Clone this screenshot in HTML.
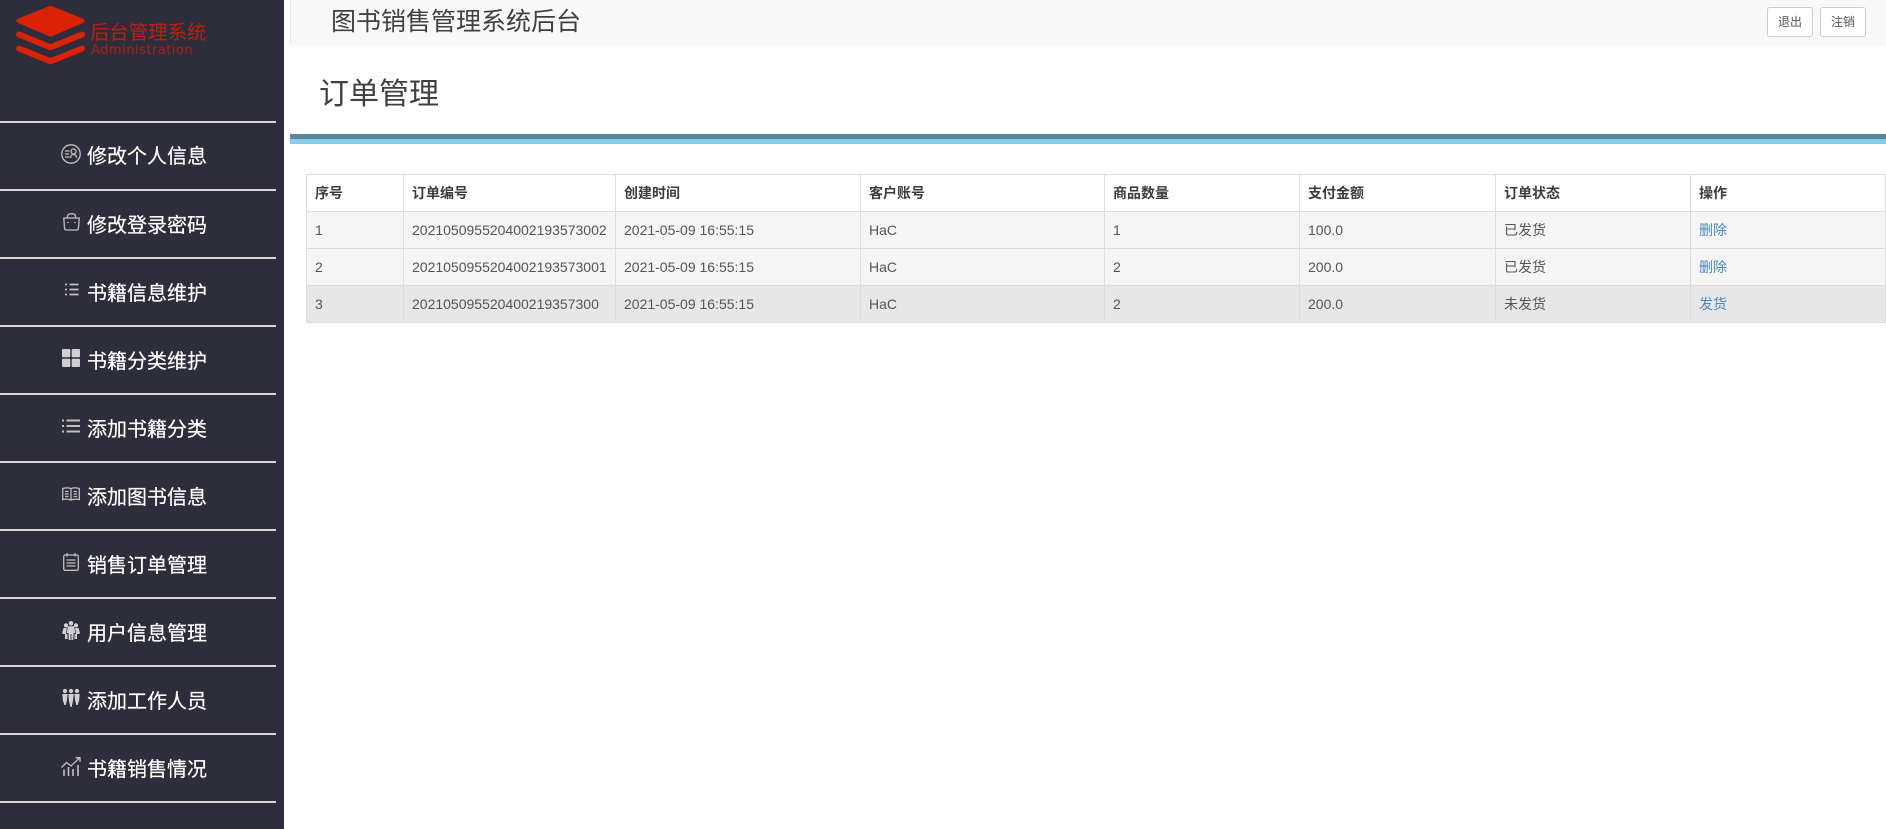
<!DOCTYPE html>
<html lang="zh"><head><meta charset="utf-8"><title>图书销售管理系统后台</title>
<style>
html,body{margin:0;padding:0;width:1886px;height:829px;overflow:hidden;background:#fff}
body{font-family:"Liberation Sans","Noto Sans CJK SC",sans-serif;color:#333;position:relative}
.a{position:absolute;white-space:nowrap}
#side{left:0;top:0;width:284px;height:829px;background:#2d2d3c}
.ln{left:0;width:276px;height:2px;background:#d8d8d8}
.m{left:87px;font-size:20px;line-height:28px;color:#fff;-webkit-text-stroke:.2px #fff}
svg{position:absolute;overflow:visible}
.ic{fill:none;stroke:#c0c0c4;stroke-width:1.3}
.f{fill:#d0d0d2;stroke:none}
#top{left:290px;top:0;width:1596px;height:46px;background:#f8f8f8;border-left:1px solid #e7e7e7;box-sizing:border-box}
.btn{top:7px;width:46px;height:30px;box-sizing:border-box;background:#fff;border:1px solid #ccc;border-radius:3px;font-size:12px;line-height:28px;text-align:center;color:#555}
table{position:absolute;left:306px;top:174px;width:1579px;border-collapse:collapse;table-layout:fixed;font-size:14px;line-height:20px}
td,th{border:1px solid #ddd;padding:8px;text-align:left;height:20px;box-sizing:content-box;white-space:nowrap}
th{font-weight:bold;background:#fff;color:#3c3c3c}
tr.s td{background:#f5f5f5}
tr.h td{background:#e7e7e7}
td{color:#555}
td a{color:#4a88bd;text-decoration:none}
</style></head><body>
<div id="side" class="a"></div>
<svg style="left:0;top:0" width="284" height="70" viewBox="0 0 284 70">
<path d="M50.5 6.5 L83 19.5 Q85 20.7 83 22 L50.5 36 L18 22 Q16 20.7 18 19.5 Z" fill="#db2106" stroke="#db2106" stroke-width="1.5" stroke-linejoin="round"/>
<path d="M19 34.5 L50.5 47.3 L82 34.5" fill="none" stroke="#db2106" stroke-width="6" stroke-linecap="round" stroke-linejoin="round"/>
<path d="M19 48.5 L50.5 61.3 L82 48.5" fill="none" stroke="#db2106" stroke-width="6" stroke-linecap="round" stroke-linejoin="round"/>
</svg>
<div class="a" style="left:90px;top:21px;font-size:19.4px;line-height:24px;color:#bd200d">后台管理系统</div>
<div class="a" style="left:91px;top:43px;font-size:13px;line-height:15px;color:#b01e0c;letter-spacing:.5px;font-family:'DejaVu Sans',sans-serif">Administration</div>

<div class="a ln" style="top:121px"></div>
<div class="a ln" style="top:189px"></div>
<div class="a ln" style="top:257px"></div>
<div class="a ln" style="top:325px"></div>
<div class="a ln" style="top:393px"></div>
<div class="a ln" style="top:461px"></div>
<div class="a ln" style="top:529px"></div>
<div class="a ln" style="top:597px"></div>
<div class="a ln" style="top:665px"></div>
<div class="a ln" style="top:733px"></div>
<div class="a ln" style="top:801px"></div>

<div class="a m" style="top:143px">修改个人信息</div>
<div class="a m" style="top:212px">修改登录密码</div>
<div class="a m" style="top:280px">书籍信息维护</div>
<div class="a m" style="top:348px">书籍分类维护</div>
<div class="a m" style="top:416px">添加书籍分类</div>
<div class="a m" style="top:484px">添加图书信息</div>
<div class="a m" style="top:552px">销售订单管理</div>
<div class="a m" style="top:620px">用户信息管理</div>
<div class="a m" style="top:688px">添加工作人员</div>
<div class="a m" style="top:756px">书籍销售情况</div>

<svg class="ic" style="left:61px;top:144px" width="20" height="20" viewBox="0 0 20 20"><circle cx="10" cy="10" r="9.2"/><path d="M4 7H8.5M4 10H8M4 13H8.5"/><circle cx="12.5" cy="7.5" r="2.5"/><path d="M9.5 14Q10 10.5 12.5 10.5T15.8 14"/></svg>
<svg class="ic" style="left:63px;top:213px" width="17" height="18" viewBox="0 0 17 18"><path d="M.8 5H16.2L15.5 15Q15.3 17 13.5 17H3.5Q1.7 17 1.5 15Z"/><path d="M4.5 5V3.5Q4.5 .7 8.5 .7T12.5 3.5V5"/><path d="M5 9V10M12 9V10" stroke-width="1.6"/></svg>
<svg class="ic" style="left:65px;top:283px;stroke-width:1.7" width="14" height="13" viewBox="0 0 14 13"><path d="M0 1.5H2M4.5 1.5H13.5M0 6.5H2M4.5 6.5H13.5M0 11.5H2M4.5 11.5H13.5"/></svg>
<svg style="left:62px;top:349px" width="18" height="18" viewBox="0 0 18 18"><rect class="f" width="8.3" height="8.3" rx="1"/><rect class="f" x="9.7" width="8.3" height="8.3" rx="1"/><rect class="f" y="9.7" width="8.3" height="8.3" rx="1"/><rect class="f" x="9.7" y="9.7" width="8.3" height="8.3" rx="1"/></svg>
<svg class="ic" style="left:62px;top:419px;stroke-width:1.9" width="18" height="14" viewBox="0 0 18 14"><path d="M0 1.5H2M4.5 1.5H18M0 7H2M4.5 7H18M0 12.5H2M4.5 12.5H18"/></svg>
<svg class="ic" style="left:62px;top:487px" width="18" height="14" viewBox="0 0 18 14"><path d="M.7 1.5Q5 .2 9 1.5Q13 .2 17.3 1.5V12.5Q13 11.5 9 13Q5 11.5 .7 12.5ZM9 1.5V13M3 4.5H6.5M3 7H6.5M3 9.5H6.5M11.5 4.5H15M11.5 7H15M11.5 9.5H15"/></svg>
<svg class="ic" style="left:63px;top:553px" width="16" height="18" viewBox="0 0 16 18"><rect x=".7" y="2" width="14.6" height="15.3" rx="1.5"/><path d="M4 0V3.5M12 0V3.5M3.5 7H12.5M3.5 10H12.5M3.5 13H12.5"/></svg>
<svg style="left:62px;top:621px" width="18" height="19" viewBox="0 0 18 19"><g class="f"><circle cx="9" cy="2.3" r="2.3"/><circle cx="4" cy="4.4" r="2.1"/><circle cx="14" cy="4.4" r="2.1"/><path d="M5.8 5.2H12.2L13.2 12H11.7L11.2 19H9.4V13H8.6V19H6.8L6.3 12H4.8Z"/><path d="M1.5 7H4.8L4 13H5.3L5.6 18H3V13H.9L0 12ZM13.2 7H16.5L18 12L17.1 13H15V18H12.4L12.7 13H14Z"/></g></svg>
<svg style="left:62px;top:689px" width="18" height="18" viewBox="0 0 18 18"><g class="f"><circle cx="3" cy="2" r="2.1"/><circle cx="9" cy="2" r="2.1"/><circle cx="15" cy="2" r="2.1"/><path d="M.3 5H5.6L5 11 3.8 16H2.3L.8 11Z"/><path d="M6.3 5H11.7L11 12 9.7 18H8.3L7 12Z"/><path d="M12.4 5H17.7L17.2 11 15.8 16H14.3L13 11Z"/></g></svg>
<svg class="ic" style="left:61px;top:757px" width="20" height="19" viewBox="0 0 20 19"><path d="M0.5 10.5L5.5 5.5L10 9L18.5 1M14.5 .7H19V5"/><path d="M3 12.5V19M7.5 10V19M12 12V19M17 8V19" stroke-width="1.6"/></svg>

<div id="top" class="a"></div>
<div class="a" style="left:331px;top:6px;font-size:25px;line-height:32px;color:#404040">图书销售管理系统后台</div>
<div class="a btn" style="left:1767px">退出</div>
<div class="a btn" style="left:1820px">注销</div>
<div class="a" style="left:319px;top:74px;font-size:30px;line-height:42px;color:#404040">订单管理</div>
<div class="a" style="left:290px;top:134px;width:1596px;height:5px;background:#55869d"></div>
<div class="a" style="left:290px;top:139px;width:1596px;height:5px;background:#87cde9"></div>

<table>
<colgroup><col style="width:97px"><col style="width:212px"><col style="width:245px"><col style="width:244px"><col style="width:195px"><col style="width:196px"><col style="width:195px"><col style="width:195px"></colgroup>
<tr><th>序号</th><th>订单编号</th><th>创建时间</th><th>客户账号</th><th>商品数量</th><th>支付金额</th><th>订单状态</th><th>操作</th></tr>
<tr class="s"><td>1</td><td>2021050955204002193573002</td><td>2021-05-09 16:55:15</td><td>HaC</td><td>1</td><td>100.0</td><td>已发货</td><td><a>删除</a></td></tr>
<tr class="s"><td>2</td><td>2021050955204002193573001</td><td>2021-05-09 16:55:15</td><td>HaC</td><td>2</td><td>200.0</td><td>已发货</td><td><a>删除</a></td></tr>
<tr class="h"><td>3</td><td>202105095520400219357300</td><td>2021-05-09 16:55:15</td><td>HaC</td><td>2</td><td>200.0</td><td>未发货</td><td><a>发货</a></td></tr>
</table>
</body></html>
